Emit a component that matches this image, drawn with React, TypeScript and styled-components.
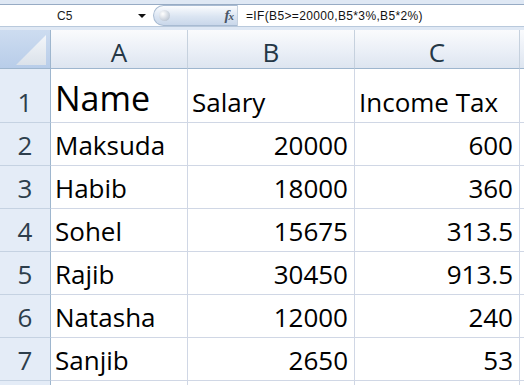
import React from "react";
import styled, { createGlobalStyle } from "styled-components";

const GlobalStyle = createGlobalStyle`
  html, body {
    margin: 0;
    padding: 0;
    background: #dfe8f4;
  }
`;

const Window = styled.div`
  width: 524px;
  height: 385px;
  overflow: hidden;
  background: #dfe8f4;
  padding-top: 4px;
  box-sizing: border-box;
`;

const FormulaBar = styled.div`
  display: flex;
  height: 23px;
  border-top: 1px solid #97abc4;
  border-bottom: 1px solid #b9c9dc;
  background: #ffffff;
  box-sizing: border-box;
`;

const NameBox = styled.div`
  width: 153px;
  display: flex;
  align-items: center;
  padding-left: 57px;
  box-sizing: border-box;
  font-family: "Liberation Sans", Arial, sans-serif;
  font-size: 12px;
  color: #1b1b1b;
`;

const NameText = styled.span`
  flex: 1;
`;

const DropArrow = styled.span`
  width: 0;
  height: 0;
  margin-right: 7px;
  border-left: 4px solid transparent;
  border-right: 4px solid transparent;
  border-top: 4px solid #111;
`;

const Pill = styled.div`
  width: 84px;
  display: flex;
  align-items: center;
  justify-content: space-between;
  padding: 0 4px 0 5px;
  box-sizing: border-box;
  border: 1px solid #a8bbd2;
  border-right: none;
  border-radius: 11px 0 0 11px;
  background: linear-gradient(#fbfcfe, #dbe5f2 55%, #c9d7ea);
`;

const Grip = styled.span`
  width: 11px;
  height: 11px;
  border-radius: 50%;
  background: radial-gradient(circle at 35% 35%, #ffffff, #c3ccd8 70%, #9aa7b8);
`;

const Fx = styled.span`
  font-family: "Liberation Serif", "Times New Roman", serif;
  font-style: italic;
  font-weight: bold;
  font-size: 15px;
  color: #4a5566;
  letter-spacing: -1px;
  & small {
    font-size: 11px;
  }
`;

const FormulaText = styled.div`
  flex: 1;
  display: flex;
  align-items: center;
  padding-left: 8px;
  border-left: 1px solid #c5d1df;
  font-family: "Liberation Sans", Arial, sans-serif;
  font-size: 12px;
  letter-spacing: 0.35px;
  color: #111;
  white-space: nowrap;
`;

const Sheet = styled.div`
  margin-top: 3px;
  display: grid;
  grid-template-columns: 51px 137px 167px 165px 1fr;
  grid-template-rows: 39px 54px repeat(7, 43px);
  background: #ffffff;
`;

const Corner = styled.div`
  position: relative;
  background: linear-gradient(#cddcf0, #b8cde9);
  border-right: 1px solid #9eb6ce;
  border-bottom: 1px solid #9eb6ce;
  &::after {
    content: "";
    position: absolute;
    left: 16px;
    top: 5px;
    width: 30px;
    height: 30px;
    background: linear-gradient(#f3f6fa, #dbe2ea);
    clip-path: polygon(100% 0, 100% 100%, 0 100%);
  }
`;

const ColHead = styled.div`
  display: flex;
  align-items: center;
  justify-content: center;
  padding-top: 5px;
  background: linear-gradient(#fafbfd, #e9eef6 60%, #dde5f0);
  border-right: 1px solid #c6d1de;
  border-bottom: 1px solid #9eb6ce;
  font-family: "Open Sans", "Liberation Sans", sans-serif;
  font-size: 26px;
  line-height: 1;
  color: #243746;
`;

const RowHead = styled.div`
  display: flex;
  align-items: flex-end;
  justify-content: center;
  padding-bottom: 7px;
  background: #e4ecf7;
  border-right: 1px solid #9eb6ce;
  border-bottom: 1px solid #c5d2e2;
  font-family: "Open Sans", "Liberation Sans", sans-serif;
  font-size: 26px;
  line-height: 1;
  color: #2d3e4c;
`;

const Cell = styled.div<{ $num?: boolean; $big?: boolean }>`
  display: flex;
  align-items: flex-end;
  justify-content: ${(p) => (p.$num ? "flex-end" : "flex-start")};
  padding: 0 6px 7px 4px;
  border-right: 1px solid #d0d7e5;
  border-bottom: 1px solid #d0d7e5;
  font-family: "Open Sans", "Liberation Sans", sans-serif;
  font-size: ${(p) => (p.$big ? "34px" : "26px")};
  line-height: 1;
  color: #000;
  white-space: nowrap;
  overflow: hidden;
`;

const rows: [string, string, string][] = [
  ["Maksuda", "20000", "600"],
  ["Habib", "18000", "360"],
  ["Sohel", "15675", "313.5"],
  ["Rajib", "30450", "913.5"],
  ["Natasha", "12000", "240"],
  ["Sanjib", "2650", "53"],
];

export default function App() {
  return (
    <>
      <GlobalStyle />
      <Window>
        <FormulaBar>
          <NameBox>
            <NameText>C5</NameText>
            <DropArrow />
          </NameBox>
          <Pill>
            <Grip />
            <Fx>
              f<small>x</small>
            </Fx>
          </Pill>
          <FormulaText>=IF(B5&gt;=20000,B5*3%,B5*2%)</FormulaText>
        </FormulaBar>
        <Sheet>
          <Corner />
          <ColHead>A</ColHead>
          <ColHead>B</ColHead>
          <ColHead>C</ColHead>
          <ColHead />

          <RowHead>1</RowHead>
          <Cell $big>Name</Cell>
          <Cell>Salary</Cell>
          <Cell>Income Tax</Cell>
          <Cell />

          {rows.map(([name, salary, tax], i) => (
            <React.Fragment key={name}>
              <RowHead>{i + 2}</RowHead>
              <Cell>{name}</Cell>
              <Cell $num>{salary}</Cell>
              <Cell $num>{tax}</Cell>
              <Cell />
            </React.Fragment>
          ))}

          <RowHead />
          <Cell />
          <Cell />
          <Cell />
          <Cell />
        </Sheet>
      </Window>
    </>
  );
}
